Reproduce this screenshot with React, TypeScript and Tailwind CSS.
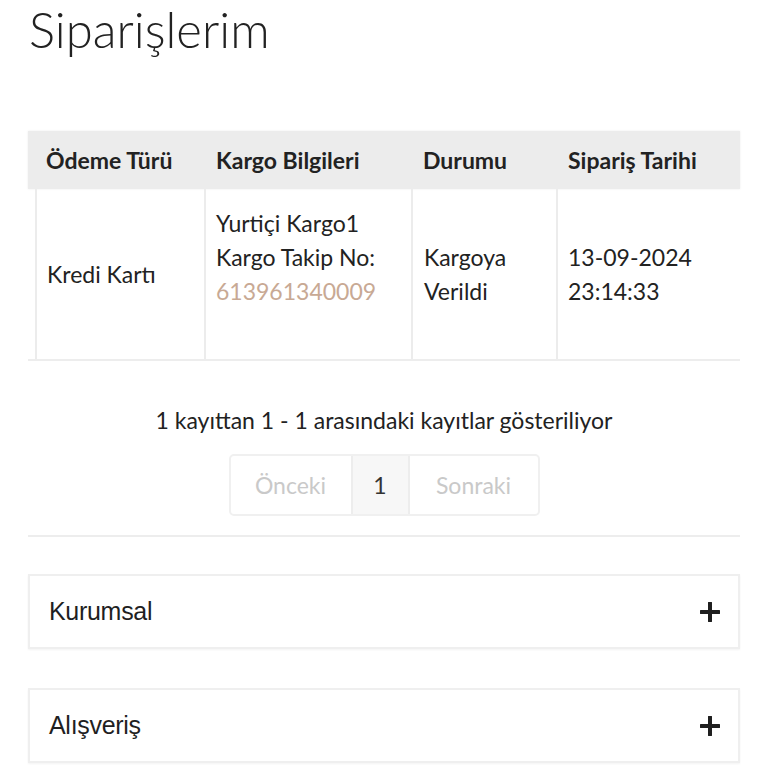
import React from "react";

const Plus = () => (
  <svg width="20" height="20" viewBox="0 0 20 20" className="shrink-0">
    <path d="M10 1v18M1 10h18" stroke="#1f1f1f" strokeWidth="4" strokeLinecap="round" />
  </svg>
);

export default function App() {
  return (
    <div className="w-[768px] h-[768px] overflow-hidden bg-white text-[#222]" style={{ fontFamily: "Lato, 'Noto Sans', sans-serif" }}>
      <div className="px-[28px]">
        <h1 className="pl-[1px] text-[49px] leading-[58px] font-light text-[#222]">Siparişlerim</h1>

        <div className="mt-[73px] w-[712px]">
          <div className="grid grid-cols-[176px_207px_145px_184px] h-[58px] bg-[#ececec] items-center text-[23px] font-bold text-[#222] shadow-[0_0_2px_rgba(0,0,0,0.08)]">
            <div className="pl-[18px]">Ödeme Türü</div>
            <div className="pl-[12px]">Kargo Bilgileri</div>
            <div className="pl-[12px]">Durumu</div>
            <div className="pl-[12px]">Sipariş Tarihi</div>
          </div>
          <div className="grid grid-cols-[176px_207px_145px_184px] h-[172px] border-b-2 border-[#ededed] text-[23px] leading-[34px] text-[#222]">
            <div className="pl-[7px] h-full">
              <div className="h-full border-l-2 border-[#ececec] flex items-center pl-[10px]">Kredi Kartı</div>
            </div>
            <div className="h-full border-l-2 border-[#ececec] flex flex-col justify-center pl-[10px]">
              <div>Yurtiçi Kargo1</div>
              <div>Kargo Takip No:</div>
              <div className="text-[#c8a994]">613961340009</div>
              <div className="h-[34px]" />
            </div>
            <div className="h-full border-l-2 border-[#ececec] flex flex-col justify-center pl-[11px]">
              <div>Kargoya</div>
              <div>Verildi</div>
            </div>
            <div className="h-full border-l-2 border-[#ececec] flex flex-col justify-center pl-[10px]">
              <div>13-09-2024</div>
              <div>23:14:33</div>
            </div>
          </div>
        </div>

        <div className="mt-[45px] text-center text-[23px] leading-[28px] text-[#222]">1 kayıttan 1 - 1 arasındaki kayıtlar gösteriliyor</div>

        <div className="mt-[20px] flex justify-center">
          <div className="flex h-[62px] rounded-[5px] border-2 border-[#f0f0f0] overflow-hidden text-[23px]">
            <div className="w-[120px] flex items-center justify-center text-[#c9c9c9]">Önceki</div>
            <div className="w-[59px] flex items-center justify-center bg-[#f7f7f7] border-x-2 border-[#ededed] text-[#333]">1</div>
            <div className="w-[128px] flex items-center justify-center text-[#c9c9c9]">Sonraki</div>
          </div>
        </div>

        <div className="mt-[19px] h-[2px] bg-[#ededed]" />

        <div className="mt-[37px] flex flex-col gap-[39px]" style={{ fontFamily: "'Liberation Sans', Arial, sans-serif" }}>
          {["Kurumsal", "Alışveriş"].map((t) => (
            <div key={t} className="h-[75px] border-2 border-[#efefef] shadow-[0_1px_2px_rgba(0,0,0,0.05)] flex items-center justify-between pl-[19px] pr-[18px]">
              <span className="text-[25px] text-[#1f1f1f] tracking-[-0.3px]">{t}</span>
              <Plus />
            </div>
          ))}
        </div>
      </div>
    </div>
  );
}
